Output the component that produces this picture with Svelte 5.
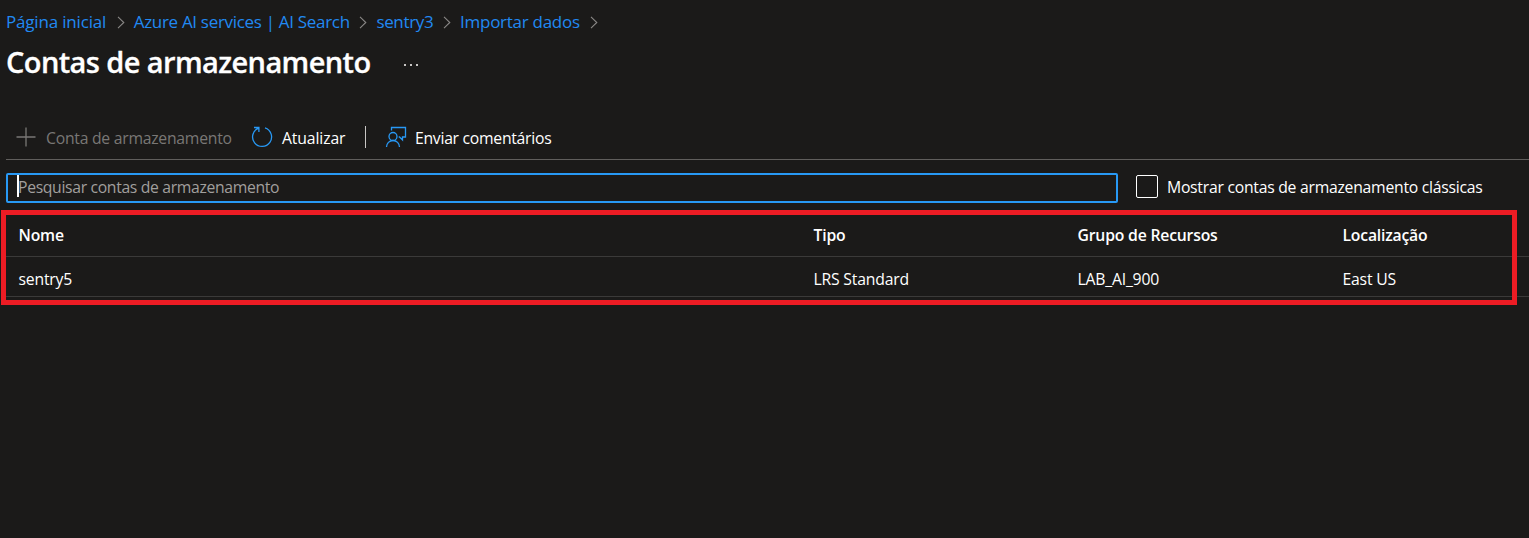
<script>
  const trail = [
    { label: 'Página inicial', width: 100, spacing: -0.18 },
    { label: 'Azure AI services | AI Search', width: 215, spacing: -0.31 },
    { label: 'sentry3', width: 56, spacing: -0.34 },
    { label: 'Importar dados', width: 119, spacing: -0.27 }
  ];
  const columns = ['Nome', 'Tipo', 'Grupo de Recursos', 'Localização'];
  const accounts = [['sentry5', 'LRS Standard', 'LAB_AI_900', 'East US']];
</script>

<main>
  <nav>
    {#each trail as item}
      <a href="#top" style="width:{item.width}px; letter-spacing:{item.spacing}px">{item.label}</a>
      <svg class="chevron" width="8" height="13" viewBox="0 0 8 13"><path d="M1 .8 6.8 6.5 1 12.2" /></svg>
    {/each}
  </nav>

  <header>
    <h1>Contas de armazenamento</h1>
    <span class="more"><i></i><i></i><i></i></span>
  </header>

  <div class="toolbar">
    <button class="add" disabled>
      <svg width="20" height="20" viewBox="0 0 20 20"><path d="M10 .5v19M.5 10h19" /></svg>
      <span>Conta de armazenamento</span>
    </button>
    <button class="refresh">
      <svg width="22" height="22" viewBox="0 0 22 22"><path d="M14 1.9A9.5 9.5 0 1 1 7.6 2.1M3 1.5H7.9V6" /></svg>
      <span>Atualizar</span>
    </button>
    <div class="divider"></div>
    <button class="feedback">
      <svg width="22" height="22" viewBox="0 0 22 22"><circle cx="8" cy="10.5" r="4" /><path d="M1.5 21a6.5 6.5 0 0 1 13 0M6.5 4.5V1.5h14v9.5h-3v3l-3-3h-.8" /></svg>
      <span>Enviar comentários</span>
    </button>
  </div>

  <div class="filters">
    <div class="search"><span class="caret"></span><span class="hint">Pesquisar contas de armazenamento</span></div>
    <label><span class="box"></span><span class="text">Mostrar contas de armazenamento clássicas</span></label>
  </div>

  <section>
    <div class="row head">
      {#each columns as c}<span>{c}</span>{/each}
    </div>
    {#each accounts as account}
      <div class="row">
        {#each account as cell}<span>{cell}</span>{/each}
      </div>
    {/each}
    <div class="highlight"></div>
  </section>
</main>

<style>
  :global(body) { background: #1b1a19; }
  main {
    height: 538px;
    overflow: hidden;
    background: #1b1a19;
    color: #fff;
    font: 15.75px/22px "Open Sans", "Noto Sans", sans-serif;
    white-space: nowrap;
  }
  svg { flex: none; fill: none; stroke: #2899f5; stroke-width: 1.3; }
  nav { display: flex; align-items: center; height: 44px; padding-left: 6px; font-size: 17px; }
  a { color: #2189f2; text-decoration: none; }
  .chevron { margin: 0 9px 0 10.7px; stroke: #8a8886; stroke-width: 1.1; }
  header { display: flex; align-items: center; height: 38px; padding-left: 6px; }
  h1 { margin: -2px 0 0; width: 398px; font-size: 29px; line-height: 38px; font-weight: 600; letter-spacing: -0.6px; -webkit-text-stroke: 0.3px #fff; }
  .more { display: flex; gap: 4px; padding-top: 3px; }
  .more i { width: 2px; height: 2px; background: #c8c6c4; }
  .toolbar {
    box-sizing: border-box;
    display: flex;
    align-items: center;
    height: 44px;
    margin: 34px 0 0 6px;
    padding-bottom: 2px;
    border-bottom: 1px solid #605e5c;
  }
  button { display: flex; align-items: center; padding: 0; border: 0; background: none; color: #fff; font: inherit; text-align: left; }
  button span { padding-top: 3px; }
  .add { margin-left: 10px; gap: 10px; width: 235px; color: #797775; letter-spacing: -0.26px; }
  .add svg { stroke: #797775; }
  .refresh { gap: 9px; width: 114px; letter-spacing: -0.12px; }
  .divider { width: 1px; height: 22px; background: #c8c6c4; }
  .feedback { gap: 8px; margin-left: 19px; letter-spacing: -0.28px; }
  .filters { display: flex; align-items: center; height: 30px; margin: 13px 0 0 6px; }
  .search {
    box-sizing: border-box;
    display: flex;
    align-items: center;
    width: 1112px;
    height: 30px;
    padding-left: 9px;
    border: 2px solid #2899f5;
    border-radius: 2px;
    color: #a19f9d;
    letter-spacing: -0.34px;
  }
  .caret { width: 2px; height: 22px; margin: -4px -1px 0 0; background: #fff; }
  .hint { padding-bottom: 2px; }
  label { display: flex; align-items: center; margin: -3px 0 0 18px; gap: 9px; letter-spacing: -0.26px; }
  .box { box-sizing: border-box; width: 22px; height: 23px; border: 1px solid #fff; border-radius: 2px; }
  section { position: relative; margin-top: 12px; }
  .row {
    box-sizing: border-box;
    display: grid;
    grid-template-columns: 795px 264px 265px 1fr;
    align-items: center;
    height: 40px;
    margin-left: 6px;
    padding: 4px 0 0 12.5px;
    border-bottom: 1px solid #3b3a39;
    letter-spacing: -0.2px;
  }
  .head { height: 42px; padding-top: 0; padding-bottom: 2px; font-weight: 600; }
  .highlight {
    position: absolute;
    left: 1px;
    top: -5px;
    box-sizing: border-box;
    width: 1516px;
    height: 95px;
    border: 5px solid #ed1c24;
  }
</style>
